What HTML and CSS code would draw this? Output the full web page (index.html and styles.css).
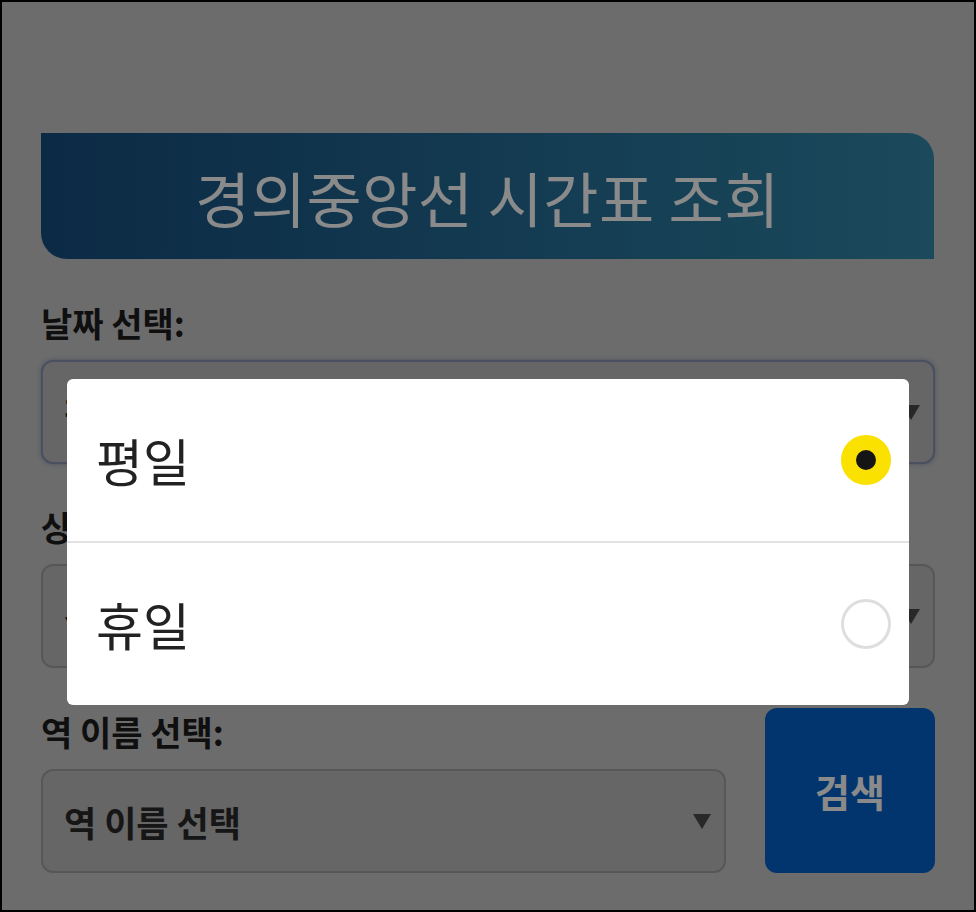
FILE: index.html
```html
<!DOCTYPE html>
<html>
<head>
    <link rel="stylesheet" href="styles.css">
</head>
<body>
    <div class="frame">
        <div class="page">
            <h1 class="title">경의중앙선 시간표 조회</h1>

            <div class="field">
                <label class="field-label">날짜 선택:</label>
                <div class="select focused">
                    <span class="select-text">평일</span>
                    <span class="arrow"></span>
                </div>
            </div>

            <div class="field">
                <label class="field-label">상행/하행 선택:</label>
                <div class="select">
                    <span class="select-text">상행</span>
                    <span class="arrow"></span>
                </div>
            </div>

            <div class="search-row">
                <div class="field grow">
                    <label class="field-label">역 이름 선택:</label>
                    <div class="select">
                        <span class="select-text">역 이름 선택</span>
                        <span class="arrow"></span>
                    </div>
                </div>
                <button type="button" class="search-btn">검색</button>
            </div>

            <div class="overlay"></div>

            <div class="dialog">
                <div class="option">
                    <span class="option-text">평일</span>
                    <span class="radio checked"></span>
                </div>
                <div class="option">
                    <span class="option-text">휴일</span>
                    <span class="radio"></span>
                </div>
            </div>
        </div>
    </div>
</body>
</html>
```

FILE: styles.css
```css
html, body {
    margin: 0;
    background: #000;
}
body {
    font-family: "Noto Sans CJK KR", "Noto Sans", sans-serif;
}
.frame {
    width: 972px;
    height: 908px;
    border: 2px solid #000;
    overflow: hidden;
}
.page {
    position: relative;
    height: 100%;
    box-sizing: border-box;
    padding: 131px 39px 0 39px;
    background: #c8c8c8;
}
.title {
    margin: 0 1px 41px 0;
    height: 126px;
    display: flex;
    align-items: center;
    justify-content: center;
    background: linear-gradient(to right, #164e80, #3289aa);
    border-radius: 0 26px 0 26px;
    color: #fff;
    font-size: 60px;
    font-weight: 400;
    letter-spacing: 0.5px;
}
.field {
    margin-bottom: 40px;
}
.field-label {
    display: block;
    font-size: 34px;
    font-weight: 700;
    line-height: 46px;
    margin-bottom: 14px;
    color: #1c1c1c;
}
.select {
    height: 104px;
    box-sizing: border-box;
    border: 2px solid #a2a2a2;
    border-radius: 12px;
    background: #bcbcbc;
    display: flex;
    align-items: center;
    justify-content: space-between;
    padding: 0 13px 0 21px;
}
.select.focused {
    border-color: #8994b2;
    box-shadow: 0 0 5px rgba(60, 80, 140, 0.4);
}
.select-text {
    font-size: 35px;
    font-weight: 700;
    color: #2a2a2a;
}
.arrow {
    width: 0;
    height: 0;
    border-left: 9px solid transparent;
    border-right: 9px solid transparent;
    border-top: 15px solid #4a4a4a;
}
.search-row {
    display: flex;
    align-items: flex-end;
    gap: 39px;
}
.search-row .field {
    margin-bottom: 0;
}
.grow {
    flex: 1;
}
.search-btn {
    width: 170px;
    height: 165px;
    border: none;
    border-radius: 12px;
    background: #0460cc;
    color: #fff;
    font-family: inherit;
    font-size: 38px;
    font-weight: 700;
}
.overlay {
    position: absolute;
    inset: 0;
    background: rgba(0, 0, 0, 0.46);
}
.dialog {
    position: absolute;
    left: 65px;
    top: 377px;
    width: 842px;
    background: #fff;
    border-radius: 6px;
    overflow: hidden;
}
.option {
    height: 162px;
    display: flex;
    align-items: center;
    justify-content: space-between;
    padding: 0 18px 0 29px;
}
.option + .option {
    border-top: 2px solid #e2e2e2;
    height: 162px;
}
.option-text {
    font-size: 51px;
    color: #222;
}
.radio {
    width: 50px;
    height: 50px;
    box-sizing: border-box;
    border-radius: 50%;
    border: 3px solid #dedede;
    background: #fff;
}
.radio.checked {
    border: 15px solid #fae100;
    background: #151515;
}
```
